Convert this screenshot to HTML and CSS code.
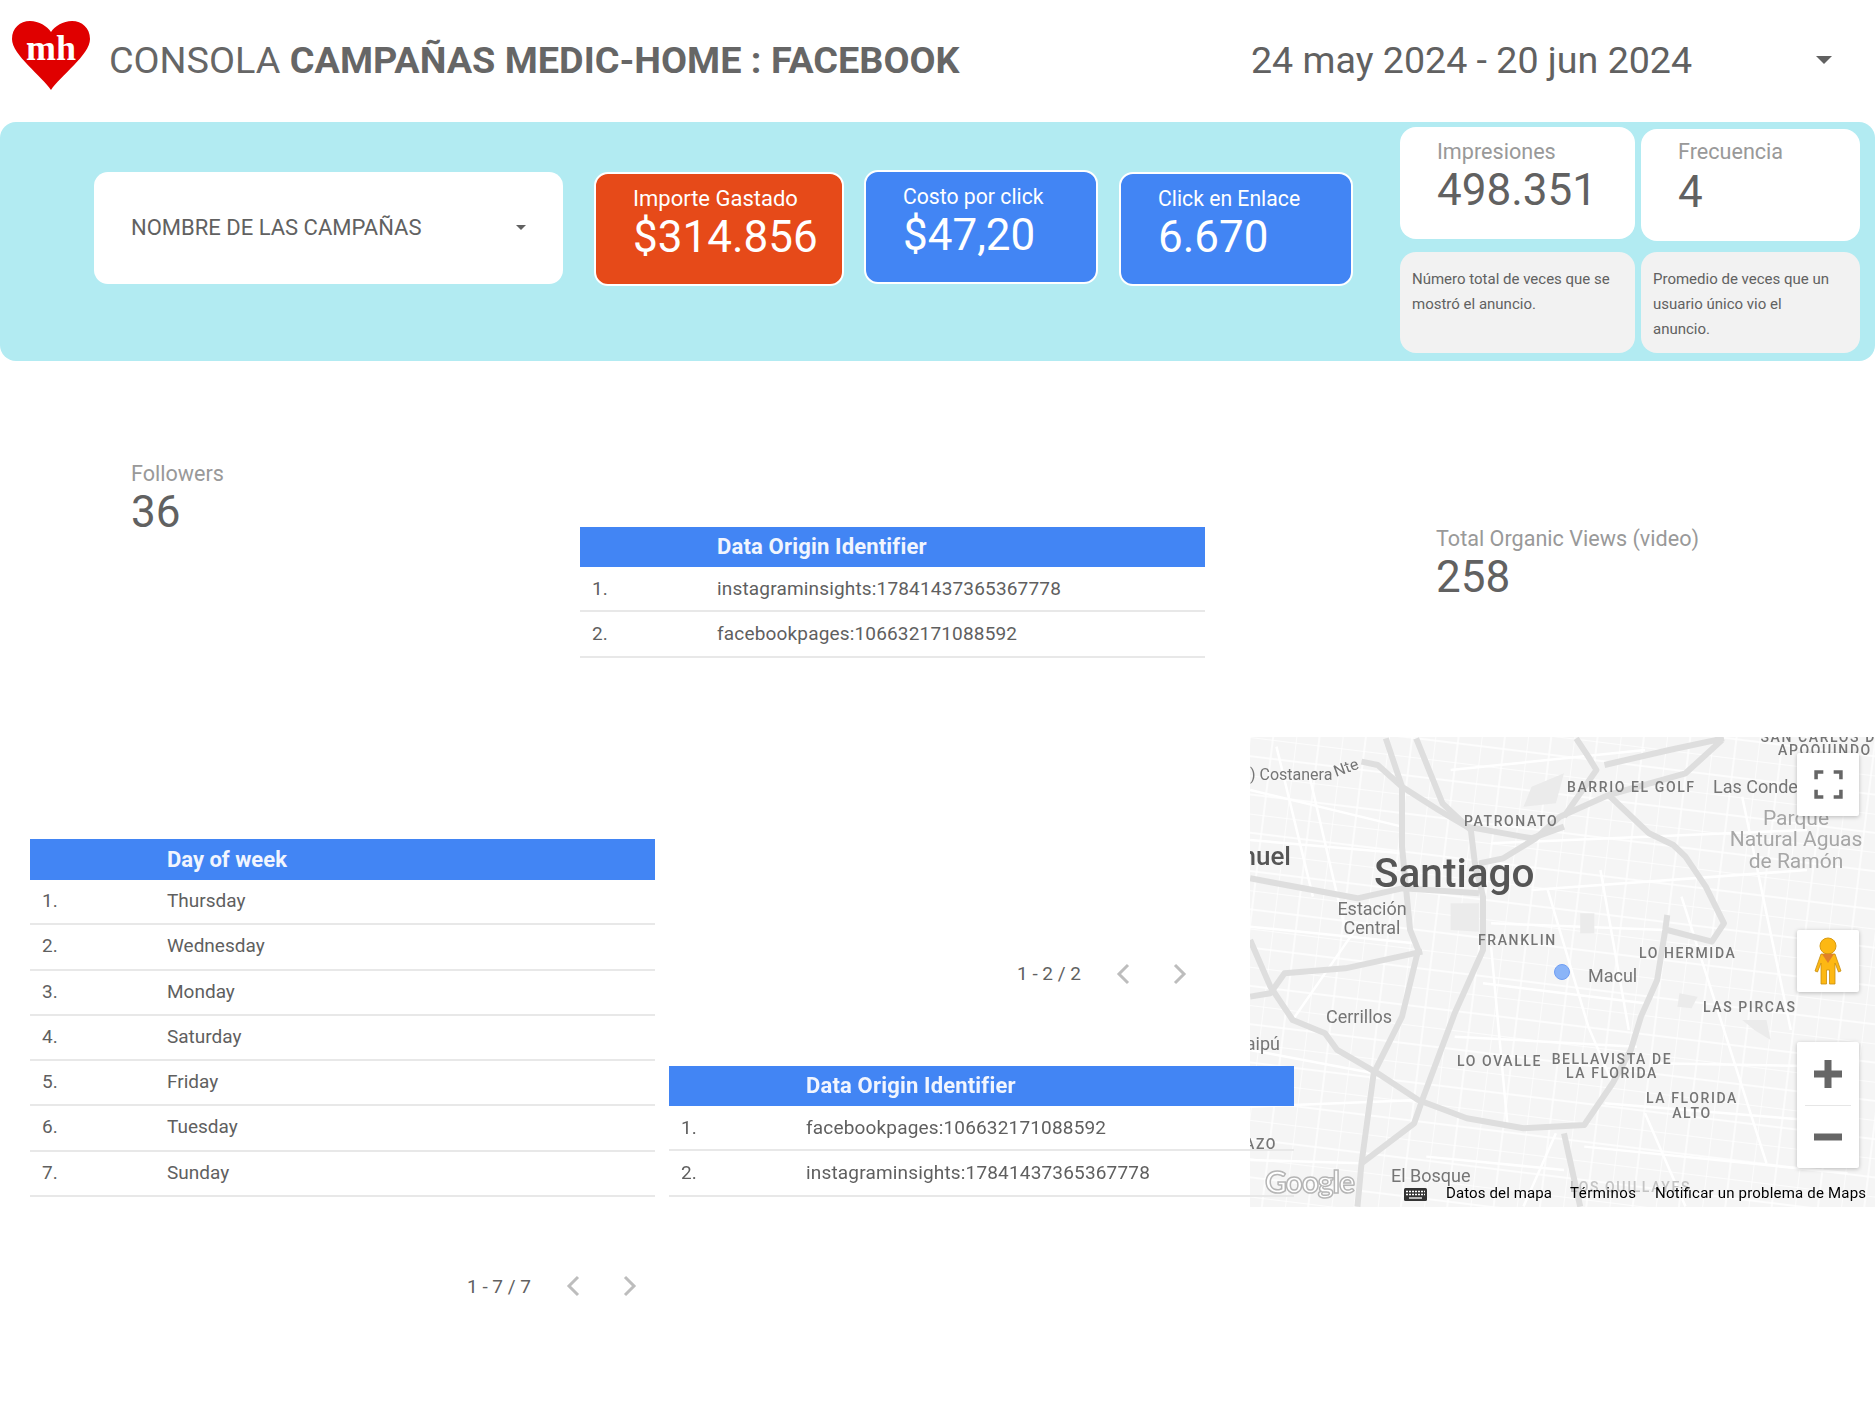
FILE: index.html
```html
<!DOCTYPE html>
<html lang="es">
<head>
	<meta charset="UTF-8">
	<title>Consola campañas Medic-Home</title>
	<link rel="stylesheet" href="styles.css">
</head>
<body>
	<div class="report">
		<header class="top">
			<svg class="logo" viewBox="0 0 78 70">
				<path d="M39 69 C30 55 0 34 0 18 C0 7 8 0 18 0 C27 0 35 5 39 11 C43 5 51 0 60 0 C70 0 78 7 78 18 C78 34 48 55 39 69 Z" fill="#e00000"/>
				<text x="39" y="39" text-anchor="middle" class="logo-text">mh</text>
			</svg>
			<h1 class="title">CONSOLA <b>CAMPAÑAS MEDIC-HOME : FACEBOOK</b></h1>
			<div class="date">24 may 2024 - 20 jun 2024</div>
			<span class="caret caret-big"></span>
		</header>

		<section class="band">
			<div class="select">
				<span>NOMBRE DE LAS CAMPAÑAS</span>
				<span class="caret"></span>
			</div>
			<div class="kpi kpi-orange">
				<div class="kpi-label">Importe Gastado</div>
				<div class="kpi-value">$314.856</div>
			</div>
			<div class="kpi kpi-blue kpi-cost">
				<div class="kpi-label">Costo por click</div>
				<div class="kpi-value">$47,20</div>
			</div>
			<div class="kpi kpi-blue kpi-clicks">
				<div class="kpi-label">Click en Enlace</div>
				<div class="kpi-value">6.670</div>
			</div>
			<div class="stats">
				<div class="stat stat-imp">
					<div class="stat-label">Impresiones</div>
					<div class="stat-value">498.351</div>
				</div>
				<div class="stat stat-freq">
					<div class="stat-label">Frecuencia</div>
					<div class="stat-value">4</div>
				</div>
				<p class="note">Número total de veces que se mostró el anuncio.</p>
				<p class="note note-wide">Promedio de veces que un usuario único vio el anuncio.</p>
			</div>
		</section>

		<main class="lower">
			<div class="metric metric-followers">
				<div class="metric-label">Followers</div>
				<div class="metric-value">36</div>
			</div>

			<div class="block block-origin">
				<div class="tbl">
					<div class="tbl-head"><span></span><span>Data Origin Identifier</span></div>
					<div class="tbl-row"><span>1.</span><span>instagraminsights:17841437365367778</span></div>
					<div class="tbl-row"><span>2.</span><span>facebookpages:106632171088592</span></div>
				</div>
				<div class="pager pager-origin">
					<span>1 - 2 / 2</span>
					<svg class="chev" viewBox="0 0 24 24"><polyline points="16,3 7,12 16,21"/></svg>
					<svg class="chev" viewBox="0 0 24 24"><polyline points="8,3 17,12 8,21"/></svg>
				</div>
			</div>

			<div class="metric metric-organic">
				<div class="metric-label">Total Organic Views (video)</div>
				<div class="metric-value">258</div>
			</div>

			<div class="map">
				<svg class="map-art" viewBox="0 0 625 470">
					<defs>
						<pattern id="streets" width="46" height="38" patternUnits="userSpaceOnUse" patternTransform="rotate(7)">
							<path d="M0 0H46M0 19H46M0 0V38M23 0V38" stroke="#fff" stroke-width="1.4" fill="none"/>
						</pattern>
					</defs>
					<rect width="625" height="470" fill="#f5f5f5"/>
					<rect width="625" height="470" fill="url(#streets)"/>
					<g class="roads" transform="translate(-10,-7) scale(.405,.3333)">
						<path class="street" d="M25 180L400 290M25 330L400 370M25 590L430 640M25 960L330 1030M25 1130L440 1110M25 1290L300 1300M520 120L1000 60M620 340L1400 300M720 480L1400 420M620 580L1050 600M600 760L1000 820M530 920L980 950M1020 1000L1500 1010M900 1120L1500 1180M850 1250L1500 1330M460 1280L800 1320M130 870L290 590M760 480L860 890L920 1060M890 420L960 900M1090 500L1300 1300M1240 200L1360 900M620 650L660 1180M170 130L260 600M90 50L180 500M780 1210L700 1430M1000 1150L1100 1430"/>
						<path class="block-shape" d="M700 230L720 170L800 130L780 220Z"/>
						<path class="block-shape" d="M1240 870L1300 870L1310 930L1270 900Z"/>
						<path class="block-shape" d="M1085 790L1130 800L1115 835L1080 830Z"/>
						<path class="block-shape" d="M520 520L590 520L590 605L520 600Z"/>
						<path class="block-shape" d="M840 550L875 550L875 610L840 610Z"/>
						<path class="road" d="M25 630L75 770L130 870L210 910L240 960L340 1030L440 1110L560 1165L700 1195L850 1185L920 1060L965 960L990 860L1030 750L1050 600L1055 555"/>
						<path class="road" d="M1055 600L1165 635L1195 580L1150 470L1100 380L1070 345L1010 310L910 195L790 260L730 325L650 385L590 400"/>
						<path class="road" d="M300 95L340 105L400 170L490 240L560 290L720 325L800 290"/>
						<path class="road" d="M360 25L400 170L400 350L420 600L440 660L400 860L330 1030L300 1300L290 1430"/>
						<path class="road" d="M435 25L470 130L500 220L570 300L580 400L600 500L600 660L530 850L450 1110L430 1180L300 1300"/>
						<path class="road" d="M25 800L75 790L110 730L260 715L450 665"/>
						<path class="road" d="M25 445L290 505L400 475L590 490"/>
						<path class="road" d="M830 25L860 80L880 120L800 260"/>
						<path class="road" d="M900 105L1060 60L1195 25M910 195L1100 130L1190 30"/>
						<path class="road" d="M800 1210L840 1430"/>
					</g>
					<g class="lbl-caps">
						<text x="573" y="5" text-anchor="middle">SAN CARLOS DE</text>
						<text x="575" y="18" text-anchor="middle">APOQUINDO</text>
						<text x="317" y="55">BARRIO EL GOLF</text>
						<text x="214" y="89">PATRONATO</text>
						<text x="228" y="208">FRANKLIN</text>
						<text x="389" y="221">LO HERMIDA</text>
						<text x="453" y="275">LAS PIRCAS</text>
						<text x="207" y="329">LO OVALLE</text>
						<text x="362" y="327" text-anchor="middle">BELLAVISTA DE</text>
						<text x="362" y="341" text-anchor="middle">LA FLORIDA</text>
						<text x="442" y="366" text-anchor="middle">LA FLORIDA</text>
						<text x="442" y="381" text-anchor="middle">ALTO</text>
						<text x="27" y="412" text-anchor="end">AZO</text>
						<text x="320" y="455" class="lbl-faint">LOS QUILLAYES</text>
					</g>
					<g class="lbl">
						<text x="0" y="43" class="lbl-sm">) Costanera</text>
						<text x="86" y="40" class="lbl-sm" transform="rotate(-20 86 40)">Nte</text>
						<text x="463" y="56">Las Condes</text>
						<text x="546" y="88" text-anchor="middle" class="lbl-park">Parque</text>
						<text x="546" y="109" text-anchor="middle" class="lbl-park">Natural Aguas</text>
						<text x="546" y="131" text-anchor="middle" class="lbl-park">de Ramón</text>
						<text x="41" y="128" text-anchor="end" class="lbl-dark">Pudahuel</text>
						<text x="124" y="150" class="lbl-city">Santiago</text>
						<text x="122" y="178" text-anchor="middle">Estación</text>
						<text x="122" y="197" text-anchor="middle">Central</text>
						<text x="338" y="245">Macul</text>
						<text x="76" y="286">Cerrillos</text>
						<text x="30" y="313" text-anchor="end">Maipú</text>
						<text x="141" y="445">El Bosque</text>
					</g>
					<circle cx="312" cy="235" r="7.5" fill="#8ab4f8" stroke="#6f9df2"/>
					<text x="15" y="456" textLength="90" class="google">Google</text>
					<g class="keys">
						<rect x="154" y="451" width="23" height="13" rx="1.5" fill="#333"/>
						<path d="M156 454.5H175M156 457.5H175" stroke="#fff" stroke-width="1.3" stroke-dasharray="2 1"/>
						<path d="M159 461H172" stroke="#fff" stroke-width="1.3"/>
					</g>
					<text x="196" y="461" textLength="106" class="attrib">Datos del mapa</text>
					<text x="320" y="461" textLength="66" class="attrib">Términos</text>
					<text x="405" y="461" textLength="211" class="attrib">Notificar un problema de Maps</text>
				</svg>
				<div class="map-btn btn-full">
					<svg viewBox="0 0 28 28"><path d="M2 9V2H9M19 2H26V9M26 19V26H19M9 26H2V19" stroke="#666" stroke-width="3.4" fill="none"/></svg>
				</div>
				<div class="map-btn btn-peg">
					<svg viewBox="0 0 28 48">
						<circle cx="14" cy="9" r="8" fill="#fdb813" stroke="#d99a10"/>
						<path d="M7 17H21L27 34L24.5 35L21 26V47H15.5V33H12.5V47H7V26L3.5 35L1 34Z" fill="#fdb813" stroke="#c88d10" stroke-width=".8"/>
						<path d="M8 17H20L14 26Z" fill="#e0802a"/>
					</svg>
				</div>
				<div class="map-btn btn-zoom">
					<div class="zoom-part"><svg viewBox="0 0 28 28"><path d="M0 14H28M14 0V28" stroke="#666" stroke-width="7"/></svg></div>
					<div class="zoom-part zoom-minus"><svg viewBox="0 0 28 28"><path d="M0 14H28" stroke="#666" stroke-width="7"/></svg></div>
				</div>
			</div>

			<div class="block block-days">
				<div class="tbl">
					<div class="tbl-head"><span></span><span>Day of week</span></div>
					<div class="tbl-row"><span>1.</span><span>Thursday</span></div>
					<div class="tbl-row"><span>2.</span><span>Wednesday</span></div>
					<div class="tbl-row"><span>3.</span><span>Monday</span></div>
					<div class="tbl-row"><span>4.</span><span>Saturday</span></div>
					<div class="tbl-row"><span>5.</span><span>Friday</span></div>
					<div class="tbl-row"><span>6.</span><span>Tuesday</span></div>
					<div class="tbl-row"><span>7.</span><span>Sunday</span></div>
				</div>
				<div class="pager pager-days">
					<span>1 - 7 / 7</span>
					<svg class="chev" viewBox="0 0 24 24"><polyline points="16,3 7,12 16,21"/></svg>
					<svg class="chev" viewBox="0 0 24 24"><polyline points="8,3 17,12 8,21"/></svg>
				</div>
			</div>

			<div class="block block-origin2">
				<div class="tbl">
					<div class="tbl-head"><span></span><span>Data Origin Identifier</span></div>
					<div class="tbl-row"><span>1.</span><span>facebookpages:106632171088592</span></div>
					<div class="tbl-row"><span>2.</span><span>instagraminsights:17841437365367778</span></div>
				</div>
			</div>
		</main>
	</div>
</body>
</html>
```

FILE: styles.css
```css
*{
	box-sizing: border-box;
}
body{
	margin: 0;
	background: #fff;
	font-family: Roboto, "Liberation Sans", sans-serif;
	color: #616161;
}
.report{
	width: 1875px;
	height: 1407px;
	overflow: hidden;
}

/* header */
.top{
	height: 122px;
	display: flex;
	align-items: center;
	padding: 0 0 2px 12px;
}
.logo{
	width: 78px;
	height: 70px;
	margin-top: -8px;
	flex: none;
}
.logo-text{
	font-family: "Liberation Serif", serif;
	font-weight: bold;
	font-size: 36px;
	fill: #fff;
}
.title{
	margin: 0 0 0 19px;
	width: 1142px;
	font-size: 37.8px;
	font-weight: 400;
	color: #666;
	white-space: nowrap;
}
.title b{
	font-weight: 700;
}
.date{
	width: 565px;
	font-size: 37.6px;
	color: #616161;
	white-space: nowrap;
}
.caret{
	width: 0;
	height: 0;
	border-left: 5px solid transparent;
	border-right: 5px solid transparent;
	border-top: 5px solid #616161;
}
.caret-big{
	border-left-width: 8px;
	border-right-width: 8px;
	border-top-width: 8px;
}

/* blue band */
.band{
	height: 239px;
	background: #b2ebf2;
	border-radius: 16px;
	display: flex;
	padding-left: 94px;
}
.select{
	width: 469px;
	height: 112px;
	margin-top: 50px;
	margin-right: 31px;
	padding: 0 37px 2px;
	background: #fff;
	border-radius: 14px;
	display: flex;
	align-items: center;
	justify-content: space-between;
	font-size: 22px;
}
.kpi{
	height: 114px;
	margin-top: 50px;
	padding: 12px 0 0 37px;
	border: 2px solid #fff;
	border-radius: 14px;
	color: #fff;
}
.kpi-orange{
	width: 250px;
	margin-right: 20px;
	background: #e64a19;
}
.kpi-blue{
	background: #4285f4;
}
.kpi-cost{
	width: 234px;
	margin-top: 48px;
	margin-right: 21px;
}
.kpi-clicks{
	width: 234px;
	margin-right: 47px;
}
.kpi-label{
	font-size: 22px;
	line-height: 26px;
}
.kpi-blue .kpi-label{
	font-size: 21.2px;
}
.kpi-value{
	font-size: 44px;
	line-height: 50px;
}
.stats{
	width: 460px;
	display: grid;
	grid-template-columns: 235px 219px;
	column-gap: 6px;
	align-content: start;
	padding-top: 5px;
}
.stat{
	height: 112px;
	background: #fff;
	border-radius: 16px;
	padding: 12px 0 0 37px;
}
.stat-freq{
	margin-top: 2px;
	padding-top: 10px;
}
.stat-freq .stat-label{
	margin-bottom: 2px;
}
.stat-label{
	font-size: 21.6px;
	line-height: 26px;
	color: #999;
}
.stat-value{
	font-size: 44px;
	line-height: 50px;
}
.note{
	margin: 11px 0 0;
	height: 101px;
	padding: 15px 12px 0;
	background: #f2f2f2;
	border-radius: 16px;
	font-size: 15px;
	line-height: 25px;
}
.note-wide{
	padding-right: 18px;
}

/* canvas below the band */
.lower{
	height: 1046px;
	display: grid;
	grid-template-columns: 30px 101px 449px 75px 14px 536px 45px 44px 142px 439px;
	grid-template-rows: 101px 65px 210px 102px 227px 341px;
}
.metric{
	align-self: start;
}
.metric-label{
	font-size: 21.6px;
	line-height: 26px;
	color: #999;
}
.metric-value{
	font-size: 44px;
	line-height: 50px;
}
.metric-followers{
	grid-column: 3 / 5;
	grid-row: 2 / 7;
	margin-top: -1px;
}
.metric-organic{
	grid-column: 10 / 11;
	grid-row: 3 / 7;
	margin-top: -1px;
}
.block{
	align-self: start;
	z-index: 1;
}
.block-origin{
	grid-column: 4 / 7;
	grid-row: 3 / 7;
	width: 625px;
}
.block-days{
	grid-column: 2 / 5;
	grid-row: 5 / 7;
	width: 625px;
}
.block-origin2{
	grid-column: 6 / 9;
	grid-row: 6 / 7;
	width: 625px;
}
.tbl-head,
.tbl-row{
	display: grid;
	grid-template-columns: 125px 1fr;
	padding-left: 12px;
}
.tbl-head{
	height: 40px;
	line-height: 40px;
	background: #4285f4;
	font-size: 22px;
	font-weight: 700;
	color: #f1f5fe;
}
.block-origin .tbl-head,
.block-origin2 .tbl-head{
	letter-spacing: .17px;
}
.block-days .tbl-head{
	height: 41px;
	line-height: 42px;
}
.tbl-row{
	height: 45.4px;
	line-height: 43px;
	border-bottom: 2px solid #e8e8e8;
	font-size: 19px;
	color: #5f5f5f;
}
.block-days .tbl-row{
	height: 45.3px;
	line-height: 42px;
}
.block-origin .tbl-row,
.block-origin2 .tbl-row{
	letter-spacing: .17px;
}
.pager{
	display: flex;
	justify-content: flex-end;
	align-items: center;
	gap: 31px;
	padding-right: 14px;
	font-size: 19px;
}
.pager-origin{
	margin-top: 304px;
}
.pager-days{
	margin-top: 77px;
}
.chev{
	width: 24px;
	height: 24px;
	fill: none;
	stroke: #bdbdbd;
	stroke-width: 3;
}

/* map */
.map{
	grid-column: 8 / 11;
	grid-row: 4 / 7;
	width: 625px;
	height: 470px;
	position: relative;
	overflow: hidden;
}
.map-art{
	display: block;
	width: 625px;
	height: 470px;
}
.roads{
	filter: blur(.6px);
}
.road,
.street{
	vector-effect: non-scaling-stroke;
	fill: none;
}
.road{
	stroke: #dedede;
	stroke-width: 6;
	stroke-linejoin: round;
}
.street{
	stroke: #fff;
	stroke-width: 2.5;
}
.block-shape{
	fill: #ebebeb;
}
.lbl-caps,
.lbl{
	filter: blur(.3px);
}
.lbl-caps text{
	font-size: 14px;
	font-weight: 500;
	letter-spacing: 1.6px;
	fill: #757575;
}
.lbl-caps .lbl-faint{
	fill: #c4c4c4;
}
.lbl text{
	font-size: 18px;
	fill: #757575;
}
.lbl .lbl-sm{
	font-size: 16px;
}
.lbl .lbl-park{
	font-size: 21px;
	fill: #a6a6a6;
}
.lbl .lbl-dark{
	font-size: 26px;
	font-weight: 500;
	fill: #555;
}
.lbl .lbl-city{
	font-size: 40.5px;
	font-weight: 500;
	fill: #555;
}
.google{
	font-family: Lato, sans-serif;
	font-size: 30px;
	font-weight: 700;
	fill: #fff;
	stroke: #b5b5b5;
	stroke-width: 1.5px;
}
.attrib{
	font-size: 15px;
	fill: #000;
}
.map-btn{
	position: absolute;
	left: 547px;
	width: 62px;
	background: #fff;
	border-radius: 2px;
	box-shadow: 0 1px 4px rgba(0,0,0,.25);
	display: flex;
	align-items: center;
	justify-content: center;
}
.btn-full{
	top: 16px;
	height: 63px;
}
.btn-full svg{
	width: 29px;
	height: 29px;
}
.btn-peg{
	top: 193px;
	height: 62px;
}
.btn-peg svg{
	width: 28px;
	height: 48px;
}
.btn-zoom{
	top: 305px;
	height: 126px;
	flex-direction: column;
}
.zoom-part{
	height: 63px;
	width: 100%;
	display: flex;
	align-items: center;
	justify-content: center;
}
.zoom-part svg{
	width: 28px;
	height: 28px;
}
.zoom-minus{
	position: relative;
}
.zoom-minus::before{
	content: "";
	position: absolute;
	top: 0;
	left: 8px;
	right: 8px;
	border-top: 1px solid #e6e6e6;
}
```
